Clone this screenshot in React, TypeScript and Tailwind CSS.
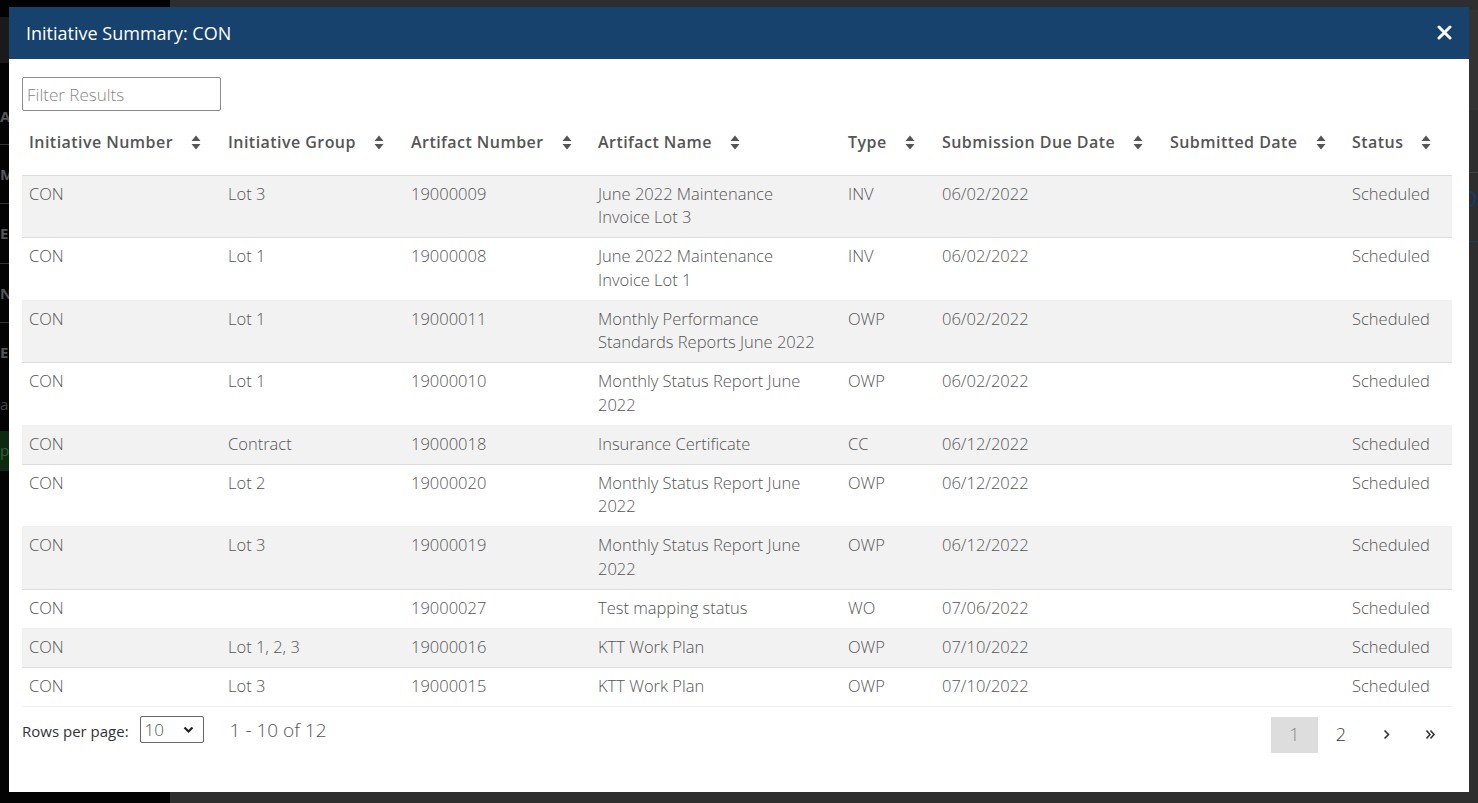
import React from 'react';

type Row = {
  initiative: string;
  group: string;
  artifactNumber: string;
  artifactName: string;
  type: string;
  dueDate: string;
  submittedDate: string;
  status: string;
};

const rows: Row[] = [
  { initiative: 'CON', group: 'Lot 3', artifactNumber: '19000009', artifactName: 'June 2022 Maintenance Invoice Lot 3', type: 'INV', dueDate: '06/02/2022', submittedDate: '', status: 'Scheduled' },
  { initiative: 'CON', group: 'Lot 1', artifactNumber: '19000008', artifactName: 'June 2022 Maintenance Invoice Lot 1', type: 'INV', dueDate: '06/02/2022', submittedDate: '', status: 'Scheduled' },
  { initiative: 'CON', group: 'Lot 1', artifactNumber: '19000011', artifactName: 'Monthly Performance Standards Reports June 2022', type: 'OWP', dueDate: '06/02/2022', submittedDate: '', status: 'Scheduled' },
  { initiative: 'CON', group: 'Lot 1', artifactNumber: '19000010', artifactName: 'Monthly Status Report June 2022', type: 'OWP', dueDate: '06/02/2022', submittedDate: '', status: 'Scheduled' },
  { initiative: 'CON', group: 'Contract', artifactNumber: '19000018', artifactName: 'Insurance Certificate', type: 'CC', dueDate: '06/12/2022', submittedDate: '', status: 'Scheduled' },
  { initiative: 'CON', group: 'Lot 2', artifactNumber: '19000020', artifactName: 'Monthly Status Report June 2022', type: 'OWP', dueDate: '06/12/2022', submittedDate: '', status: 'Scheduled' },
  { initiative: 'CON', group: 'Lot 3', artifactNumber: '19000019', artifactName: 'Monthly Status Report June 2022', type: 'OWP', dueDate: '06/12/2022', submittedDate: '', status: 'Scheduled' },
  { initiative: 'CON', group: '', artifactNumber: '19000027', artifactName: 'Test mapping status', type: 'WO', dueDate: '07/06/2022', submittedDate: '', status: 'Scheduled' },
  { initiative: 'CON', group: 'Lot 1, 2, 3', artifactNumber: '19000016', artifactName: 'KTT Work Plan', type: 'OWP', dueDate: '07/10/2022', submittedDate: '', status: 'Scheduled' },
  { initiative: 'CON', group: 'Lot 3', artifactNumber: '19000015', artifactName: 'KTT Work Plan', type: 'OWP', dueDate: '07/10/2022', submittedDate: '', status: 'Scheduled' },
];

const columns: { label: string; width: string }[] = [
  { label: 'Initiative Number', width: 'w-[199px]' },
  { label: 'Initiative Group', width: 'w-[183px]' },
  { label: 'Artifact Number', width: 'w-[187px]' },
  { label: 'Artifact Name', width: 'w-[250px]' },
  { label: 'Type', width: 'w-[94px]' },
  { label: 'Submission Due Date', width: 'w-[228px]' },
  { label: 'Submitted Date', width: 'w-[182px]' },
  { label: 'Status', width: 'w-[107px]' },
];

// fa-sort style double caret
const SortIcon = () => (
  <svg width="10" height="15" viewBox="0 0 10 15" className="inline-block ml-[18px] -mt-[3px] align-middle">
    <path d="M5 0.5 L9.5 6 H0.5 Z" fill="#555" />
    <path d="M5 14.5 L9.5 9 H0.5 Z" fill="#555" />
  </svg>
);

const Backdrop = () => (
  <div className="flex h-[803px] w-[1478px] bg-black">
    <div className="w-[170px] shrink-0 bg-[#030303] pt-[17px] flex flex-col">
      <div className="h-[46px] bg-[#1a1a1a]" />
      <div className="h-[82px] border-b border-[#333] text-[#555] text-[15px] font-bold pt-[42px]">AF</div>
      <div className="h-[59px] border-b border-[#333] text-[#555] text-[15px] font-bold pt-[18px]">MI</div>
      <div className="h-[60px] border-b border-[#333] text-[#555] text-[15px] font-bold pt-[18px]">EN</div>
      <div className="h-[59px] border-b border-[#333] text-[#555] text-[15px] font-bold pt-[18px]">N</div>
      <div className="h-[60px] text-[#555] text-[15px] font-bold pt-[18px]">E</div>
      <div className="h-[48px] text-[#444] text-[15px] pt-[10px]">ar</div>
      <div className="h-[40px] mr-[140px] bg-[#0e2a0e] text-[#3a5a3a] text-[15px] pt-[8px]">pa</div>
    </div>
    <div className="flex-1 flex flex-col bg-[#2e2e2e] pt-[10px]">
      <div className="h-[100px] bg-[#333]" />
      <div className="h-[63px] border-b border-[#444]" />
      <div className="h-[69px] border-b border-[#1c3a5a] text-[#1c3a5a] text-[30px] text-right">p</div>
    </div>
  </div>
);

export default function App() {
  return (
    <div className="relative w-[1478px] h-[803px] overflow-hidden" style={{ fontFamily: '"Open Sans", "Noto Sans", sans-serif' }}>
      <Backdrop />
      <div className="absolute left-[9px] top-[7px] w-[1460px] h-[785px] bg-white flex flex-col">
        {/* Header */}
        <div className="h-[52px] shrink-0 bg-[#17426e] flex items-center justify-between pl-[17px] pr-[17px]">
          <span className="text-white text-[18px] leading-none">Initiative Summary: CON</span>
          <svg width="15" height="15" viewBox="0 0 15 15" className="mt-[-1px]">
            <path d="M2 2 L13 13 M13 2 L2 13" stroke="white" strokeWidth="3" strokeLinecap="round" />
          </svg>
        </div>

        {/* Body */}
        <div className="flex flex-col pl-[13px] pr-[17px] pt-[18px]">
          <input
            placeholder="Filter Results"
            className="w-[199px] h-[34px] border border-[#8a8a8a] rounded-[2px] px-[4px] text-[17px] font-light text-[#555] placeholder:text-[#888] outline-none"
          />

          <table className="mt-[9px] border-collapse table-fixed w-[1430px]">
            <thead>
              <tr className="h-[55px] border-b border-[#ddd]">
                {columns.map((c) => (
                  <th
                    key={c.label}
                    className={`${c.width} text-left align-top pt-[10px] pl-[7px] pr-0 text-[16px] font-semibold text-[#555] whitespace-nowrap tracking-[0.45px]`}
                  >
                    {c.label}
                    <SortIcon />
                  </th>
                ))}
              </tr>
            </thead>
            <tbody>
              {rows.map((r, i) => (
                <tr key={i} className={`border-b border-[#ddd] ${i % 2 === 0 ? 'bg-[#f2f2f2]' : 'bg-white border-b-[#f0f0f0]'}`}>
                  {[r.initiative, r.group, r.artifactNumber, r.artifactName, r.type, r.dueDate, r.submittedDate, r.status].map((v, j) => (
                    <td key={j} className="align-top pl-[7px] pr-[18px] pt-[6px] pb-[8.5px] text-[16.5px] font-light leading-[23.5px] text-[#555]">
                      {v}
                    </td>
                  ))}
                </tr>
              ))}
            </tbody>
          </table>

          {/* Footer */}
          <div className="flex items-start justify-between mt-[10px]">
            <div className="flex items-center h-[36px] -mt-[5px]">
              <span className="text-[15px] text-[#333] mt-[3px]">Rows per page:</span>
              <div className="ml-[11px] w-[64px] h-[27px] border border-[#666] rounded-[2px] flex items-center justify-between pl-[4px] pr-[9px]">
                <span className="text-[17px] font-light text-[#555]">10</span>
                <svg width="11" height="8" viewBox="0 0 11 8">
                  <path d="M1.5 1.5 L5.5 5.5 L9.5 1.5" stroke="#222" strokeWidth="2.2" fill="none" />
                </svg>
              </div>
              <span className="ml-[26px] text-[19px] font-light text-[#555] mt-[2px]">1 - 10 of 12</span>
            </div>
            <div className="flex items-center">
              <div className="w-[47px] h-[36px] bg-[#ddd] flex items-center justify-center text-[18px] font-light text-[#888]">1</div>
              <div className="w-[46px] h-[36px] flex items-center justify-center text-[18px] font-light text-[#333]">2</div>
              <div className="w-[44px] h-[36px] flex items-center justify-center">
                <svg width="7" height="11" viewBox="0 0 7 11">
                  <path d="M1.5 1.5 L5.5 5.5 L1.5 9.5" stroke="#333" strokeWidth="1.6" fill="none" />
                </svg>
              </div>
              <div className="w-[44px] h-[36px] flex items-center justify-center">
                <svg width="11" height="11" viewBox="0 0 11 11">
                  <path d="M1.5 1.5 L5 5.5 L1.5 9.5 M5.5 1.5 L9 5.5 L5.5 9.5" stroke="#333" strokeWidth="1.6" fill="none" />
                </svg>
              </div>
            </div>
          </div>
        </div>
      </div>
    </div>
  );
}
